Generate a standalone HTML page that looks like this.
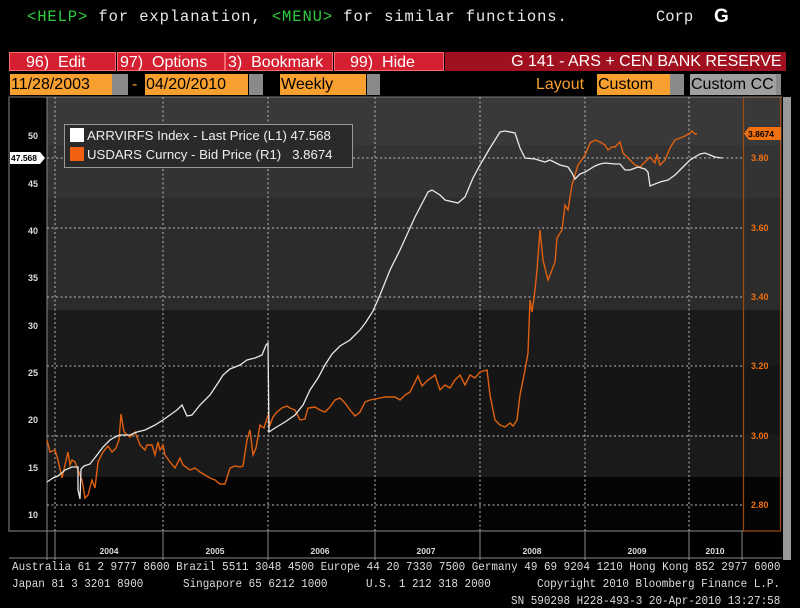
<!DOCTYPE html>
<html><head><meta charset="utf-8"><style>
body{margin:0;width:800px;height:608px;background:#000;overflow:hidden;position:relative;font-family:"Liberation Sans",sans-serif}
.a{position:absolute;white-space:nowrap}
.hd{font-family:"Liberation Mono",monospace;font-size:15.5px;color:#e8e8e8;top:8px}
.g{color:#2ecc40}
.m{top:52px;height:19px;background:#d42030;border:1px solid #ff6a70;color:#fff;font-size:16px;line-height:19px;box-sizing:border-box;overflow:hidden}
.o{top:74px;height:21px;background:#f7a030;color:#000;font-size:16px;line-height:21px;overflow:hidden;padding-left:1px}
.gr{top:74px;height:21px;background:#8a8a8a}
.ft{font-family:"Liberation Mono",monospace;font-size:12px;color:#ddd;line-height:13px;transform:scaleX(0.912);transform-origin:0 0}
</style></head><body>
<div class="a hd" style="left:27px;letter-spacing:0.9px"><span class="g">&lt;HELP&gt;</span> for explanation, <span class="g">&lt;MENU&gt;</span> for similar functions.</div>
<div class="a hd" style="left:656px">Corp</div>
<div class="a" style="left:714px;top:6px;font-size:19px;font-weight:bold;color:#fff">G</div>

<div class="a m" style="left:9px;width:107px;padding-left:16px">96)&nbsp; Edit</div>
<div class="a m" style="left:117px;width:108px;padding-left:2px">97)&nbsp; Options</div>
<div class="a m" style="left:225px;width:108px;padding-left:2px">3)&nbsp; Bookmark</div>
<div class="a m" style="left:334px;width:110px;padding-left:15px">99)&nbsp; Hide</div>
<div class="a" style="left:445px;top:52px;width:341px;height:19px;background:#a0101e;color:#fff;font-size:16px;line-height:19px;text-align:right;box-sizing:border-box">G 141 - ARS + CEN BANK RESERVE&nbsp;</div>

<div class="a o" style="left:10px;width:101px">11/28/2003</div>
<div class="a gr" style="left:112px;width:16px"></div>
<div class="a" style="left:132px;top:74px;color:#f7a030;font-size:16px;line-height:21px">-</div>
<div class="a o" style="left:145px;width:102px">04/20/2010</div>
<div class="a gr" style="left:249px;width:14px"></div>
<div class="a o" style="left:280px;width:85px">Weekly</div>
<div class="a gr" style="left:367px;width:13px"></div>
<div class="a" style="left:536px;top:74px;color:#f7a030;font-size:16px;line-height:21px">Layout</div>
<div class="a o" style="left:597px;width:72px">Custom</div>
<div class="a gr" style="left:670px;width:14px"></div>
<div class="a" style="left:690px;top:74px;width:86px;height:21px;background:#a0a0a0;color:#000;font-size:16px;line-height:21px;overflow:hidden;padding-left:1px">Custom CC</div>
<div class="a gr" style="left:776px;width:5px"></div>

<svg class="a" style="left:0;top:0" width="800" height="608" xmlns="http://www.w3.org/2000/svg">
<rect x="9" y="97" width="774" height="442" fill="#000"/>
<rect x="47" y="97" width="735" height="48" fill="#393939"/>
<rect x="47" y="145" width="735" height="53" fill="#333"/>
<rect x="47" y="198" width="735" height="112" fill="#2c2c2c"/>
<rect x="47" y="310" width="735" height="167" fill="#1a1a1a"/>
<rect x="47" y="365" width="735" height="70" fill="#151515"/>
<rect x="47" y="477" width="735" height="54" fill="#040404"/>
<rect x="9" y="97" width="38" height="434" fill="#000" stroke="#888" stroke-width="1"/>
<rect x="743.5" y="97" width="37" height="434" fill="none" stroke="#a04a10" stroke-width="1.2"/>
<line x1="47" y1="97" x2="47" y2="560" stroke="#888"/>
<line x1="9" y1="97" x2="782" y2="97" stroke="#777"/>
<rect x="783" y="97" width="8" height="463" fill="#999"/>
<g stroke="#bbb" stroke-width="1" stroke-dasharray="2,2.5" fill="none">
<path d="M47 158H743M47 228H743M47 297H743M47 366H743M47 436H743M47 505H743"/>
<path d="M55 97V531M163 97V531M268 97V531M375 97V531M480 97V531M585 97V531M689 97V531"/>
</g>
<g stroke="#888" fill="none">
<line x1="47" y1="531" x2="743" y2="531"/>
<path d="M55 531V560M163 531V560M268 531V560M375 531V560M480 531V560M585 531V560M689 531V560M742 531V560"/>
<line x1="9" y1="558" x2="782" y2="558"/>
</g>
<g fill="#ddd" font-size="8.5" font-weight="bold" text-anchor="middle">
<text x="109" y="554">2004</text><text x="215" y="554">2005</text><text x="320" y="554">2006</text><text x="426" y="554">2007</text><text x="532" y="554">2008</text><text x="637" y="554">2009</text><text x="715" y="554">2010</text>
</g>
<g fill="#ddd" font-size="9" font-weight="bold" text-anchor="end">
<text x="38" y="139">50</text><text x="38" y="187">45</text><text x="38" y="234">40</text><text x="38" y="281">35</text><text x="38" y="329">30</text><text x="38" y="376">25</text><text x="38" y="423">20</text><text x="38" y="471">15</text><text x="38" y="518">10</text>
</g>
<path d="M10 152H40L45 158L40 164H10Z" fill="#fff"/>
<text x="11" y="161" font-size="8.5" font-weight="bold" fill="#000">47.568</text>
<g fill="#f07010" font-size="9" font-weight="bold">
<text x="751" y="161">3.80</text><text x="751" y="231">3.60</text><text x="751" y="300">3.40</text><text x="751" y="369">3.20</text><text x="751" y="439">3.00</text><text x="751" y="508">2.80</text>
</g>
<path d="M749 127H781V140H749L744 133.5Z" fill="#f07010"/>
<text x="748" y="137" font-size="8.5" font-weight="bold" fill="#000">3.8674</text>
<polyline fill="none" stroke="#e06010" stroke-width="1.4" points="47,440 50,452 55,450 58,460 62,478 65,465 68,452 70,465 72,460 75,462 78,470 82,480 85,498 88,495 92,480 95,488 98,462 103,452 108,446 112,452 116,448 119,440 121,414 124,432 130,437 135,432 140,445 145,450 147,445 152,445 155,455 158,442 160,450 163,445 165,455 170,462 175,468 180,458 183,465 190,470 195,468 200,472 205,475 210,478 215,480 220,484 225,484 230,468 235,466 240,467 243,466 247,440 250,430 253,455 256,448 260,425 264,428 268,415 270,425 273,417 277,412 282,408 287,406 290,408 295,410 300,420 305,419 308,408 315,407 320,410 325,412 330,407 335,400 340,398 345,403 350,410 355,416 360,412 365,402 370,400 375,399 380,398 385,397 395,397 400,400 405,395 410,392 418,376 422,386 428,380 435,375 440,390 445,385 450,388 455,380 460,375 465,385 470,375 475,378 480,372 487,370 490,395 495,420 500,425 505,427 510,423 513,426 517,420 520,395 525,370 528,353 530,300 532,312 535,290 537,270 540,230 543,260 548,280 550,275 555,262 557,238 562,230 565,205 568,210 572,185 575,175 578,165 585,155 590,143 595,140 600,142 605,145 608,150 612,147 615,147 620,142 623,153 630,160 635,165 640,167 645,162 650,157 655,163 657,155 660,165 665,160 670,148 675,140 680,138 685,136 690,133 692,131 695,134 697,134"/>
<polyline fill="none" stroke="#e8e8e8" stroke-width="1.3" points="47,482 53,478 58,476 65,470 72,467 78,467 78,490 80,499 81,469 84,466 90,464 97,455 103,447 110,440 115,437 120,435 130,435 137,432 145,430 155,425 163,420 170,415 177,410 182,405 187,416 192,415 200,405 210,395 218,383 223,375 230,369 240,365 247,360 255,358 262,355 266,345 268,343 269,432 275,428 285,422 295,415 303,405 310,390 318,378 325,365 332,354 340,346 350,340 360,330 366,322 373,311 380,295 390,270 400,250 415,217 428,192 432,190 440,195 445,200 458,203 465,197 473,178 480,165 490,148 500,132 505,131 515,133 520,148 525,158 535,159 545,162 550,160 560,165 568,167 572,173 575,179 580,174 585,172 590,169 595,166 600,164 605,163 615,164 620,164 625,170 630,170 638,167 645,169 648,172 650,186 660,182 668,180 675,175 685,165 690,160 700,154 705,153 710,155 715,157 722,158"/>
<rect x="64.5" y="124.5" width="288" height="43" fill="#2a2a2a" stroke="#999"/>
<rect x="70" y="128" width="14" height="14" fill="#fff"/>
<rect x="70" y="147" width="14" height="14" fill="#f06010"/>
<g fill="#eee" font-size="13.2"><text x="87" y="140">ARRVIRFS Index - Last Price (L1) 47.568</text><text x="87" y="159">USDARS Curncy - Bid Price (R1)&#160;&#160;&#160;3.8674</text></g>
</svg>

<div class="a ft" style="left:12px;top:561px">Australia 61 2 9777 8600 Brazil 5511 3048 4500 Europe 44 20 7330 7500 Germany 49 69 9204 1210 Hong Kong 852 2977 6000</div>
<div class="a ft" style="left:12px;top:578px">Japan 81 3 3201 8900</div>
<div class="a ft" style="left:183px;top:578px">Singapore 65 6212 1000</div>
<div class="a ft" style="left:366px;top:578px">U.S. 1 212 318 2000</div>
<div class="a ft" style="left:537px;top:578px">Copyright 2010 Bloomberg Finance L.P.</div>
<div class="a ft" style="left:511px;top:595px">SN 590298 H228-493-3 20-Apr-2010 13:27:58</div>
</body></html>
